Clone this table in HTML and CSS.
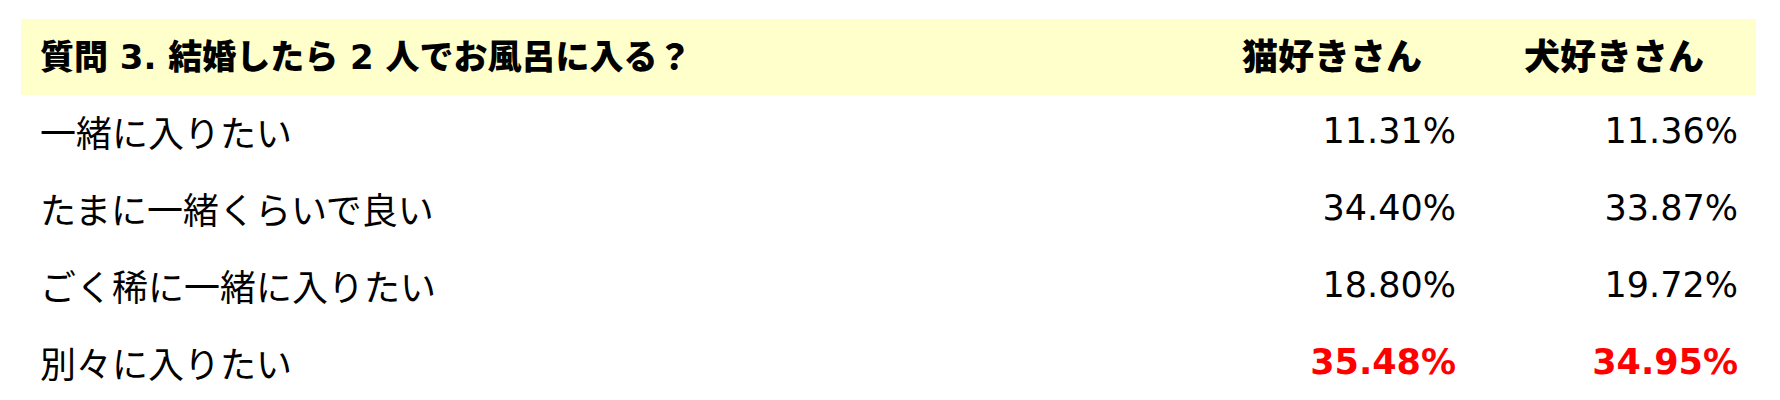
FILE: index.html
```html
<!DOCTYPE html>
<html lang="ja">

<head>
    <meta charset="UTF-8" />
    <meta name="viewport" content="width=device-width, initial-scale=1.0" />
    <title>質問 3</title>
    <link rel="stylesheet" href="styles.css">
</head>

<body>
    <table class="survey">
        <thead>
            <tr>
                <th class="question">質問 3. 結婚したら 2 人でお風呂に入る？</th>
                <th class="group">猫好きさん</th>
                <th class="group">犬好きさん</th>
            </tr>
        </thead>
        <tbody>
            <tr>
                <td class="answer">一緒に入りたい</td>
                <td class="rate">11.31%</td>
                <td class="rate">11.36%</td>
            </tr>
            <tr>
                <td class="answer">たまに一緒くらいで良い</td>
                <td class="rate">34.40%</td>
                <td class="rate">33.87%</td>
            </tr>
            <tr>
                <td class="answer">ごく稀に一緒に入りたい</td>
                <td class="rate">18.80%</td>
                <td class="rate">19.72%</td>
            </tr>
            <tr class="top">
                <td class="answer">別々に入りたい</td>
                <td class="rate">35.48%</td>
                <td class="rate">34.95%</td>
            </tr>
        </tbody>
    </table>
</body>

</html>
```

FILE: styles.css
```css
:root {
    --band: #ffffcc;
    --text: #000;
    --highlight: #ff0000;
}

* {
    box-sizing: border-box;
}

body {
    margin: 0;
    padding: 19px 24px 0 21px;
    font-family: "DejaVu Sans", "Noto Sans CJK JP", sans-serif;
    color: var(--text);
    background: white;
}

.survey {
    width: 100%;
    border-collapse: collapse;
    table-layout: fixed;
}

.survey th,
.survey td {
    padding: 0 0 6px;
    white-space: nowrap;
}

thead tr {
    height: 76px;
    background: var(--band);
}

tbody tr {
    height: 77px;
}

.question {
    text-align: left;
    padding-left: 19px !important;
    font-size: 34px;
    font-weight: 900;
}

.group {
    width: 282px;
    text-align: right;
    padding-right: 52px !important;
    font-size: 36px;
    font-weight: 900;
}

.answer {
    padding-left: 19px !important;
    font-size: 36px;
}

.rate {
    text-align: right;
    padding-right: 18px !important;
    font-size: 35px;
}

.top .rate {
    color: var(--highlight);
    font-weight: bold;
}
```
